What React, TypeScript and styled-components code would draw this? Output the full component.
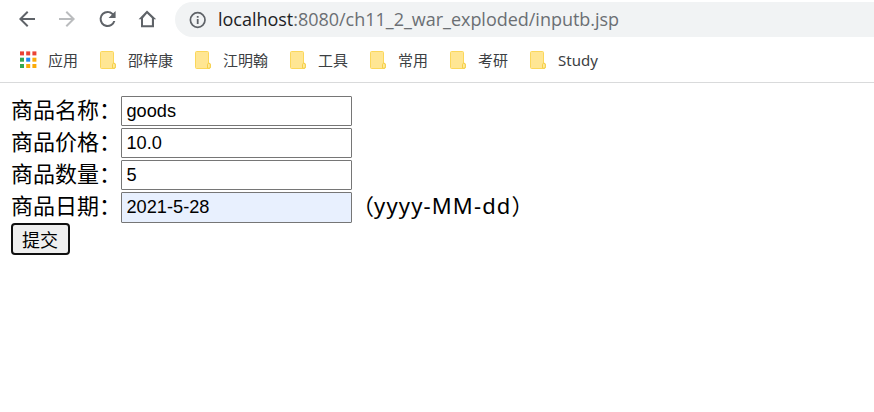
import React from 'react';
import styled, { createGlobalStyle } from 'styled-components';

const GlobalStyle = createGlobalStyle`
  * { box-sizing: border-box; }
  body { margin: 0; background: #fff; overflow: hidden; }
`;

const Window = styled.div`
  width: 874px;
  height: 412px;
  overflow: hidden;
  background: #fff;
  font-family: "Noto Sans", "Noto Sans CJK SC", sans-serif;
`;

const Toolbar = styled.header`
  display: flex;
  height: 39px;
  padding: 2px 0 2px 15px;
`;

const NavButtons = styled.nav`
  display: flex;
  gap: 16px;
  width: 160px;
  padding-top: 5px;
  flex: none;
`;

const NavIcon = styled.svg<{ $muted?: boolean }>`
  width: 24px;
  height: 24px;
  flex: none;
  fill: ${(p) => (p.$muted ? '#babcbe' : '#5f6368')};
`;

const AddressBar = styled.div`
  display: flex;
  align-items: center;
  flex: 1;
  height: 35px;
  padding-left: 13px;
  border-radius: 17.5px 0 0 17.5px;
  background: #f1f3f4;
`;

const InfoIcon = styled.svg`
  width: 20px;
  height: 20px;
  margin-right: 10px;
  flex: none;
`;

const Url = styled.span`
  color: #6b6f73;
  font-family: "Open Sans", sans-serif;
  font-size: 18px;
  line-height: 35px;
  letter-spacing: -0.02px;
  white-space: nowrap;
`;

const Host = styled.span`
  color: #202124;
`;

const Bookmarks = styled.div`
  display: flex;
  align-items: center;
  gap: 22px;
  height: 44px;
  padding: 0 0 2px 20px;
  border-bottom: 1px solid #d9dadb;
`;

const Bookmark = styled.div`
  display: flex;
  align-items: center;
  gap: 11px;
  font-size: 15px;
  line-height: 22px;
  color: #3c4043;
  white-space: nowrap;
`;

const BookmarkIcon = styled.svg`
  width: 17px;
  height: 18px;
  flex: none;
`;

const Form = styled.form`
  display: flex;
  flex-direction: column;
  align-items: flex-start;
  padding: 13px 0 0 11px;
`;

const Field = styled.label`
  display: flex;
  height: 32px;
  font-size: 22px;
  line-height: 26px;
  color: #000;
  white-space: nowrap;
`;

const FieldName = styled.span`
  width: 110px;
  flex: none;
`;

const Input = styled.input<{ $filled?: boolean }>`
  width: 231px;
  height: ${(p) => (p.$filled ? 31 : 30)}px;
  padding: 1px 4px 1px 4.5px;
  border: 1px solid #767676;
  border-radius: 1px;
  outline: none;
  background: ${(p) => (p.$filled ? '#e8f0fe' : '#fff')};
  color: #000;
  font: 18.2px "Liberation Sans", Arial, sans-serif;
`;

const Pattern = styled.span`
  letter-spacing: 1.15px;
`;

const Submit = styled.button`
  width: 59px;
  height: 32px;
  margin-top: -1px;
  padding: 0 1px 0 0;
  border: 2px solid #101010;
  border-radius: 4px;
  background: #efefef;
  color: #000;
  font: 18px/26px "Noto Sans CJK SC", sans-serif;
`;

const appDots = ['#ea4335', '#ea4335', '#ea4335', '#34a853', '#1e88f5', '#fbab09', '#34a853', '#fbab09', '#fbab09'];

const AppsIcon = () => (
  <BookmarkIcon viewBox="0 0 17 18">
    {appDots.map((color, i) => (
      <rect key={i} x={(i % 3) * 6.2} y={0.4 + Math.floor(i / 3) * 6.3} width="4" height="4" fill={color} />
    ))}
  </BookmarkIcon>
);

const FolderIcon = () => (
  <BookmarkIcon viewBox="0 0 17 18">
    <path d="M.5 1.5q0-1 1-1h11q1 0 1 1V12l1.5.5q.5.3.5 1.2v2.2q0 1.6-1.5 1.6H1.5q-1 0-1-1z" fill="#ffe693" stroke="#fbd75a" />
    <path d="M12.5 17v-3.2q0-1.5 1.2-1.5 1.6 0 1.6 1.5v2q0 1.5-1.3 1.5z" fill="#ffe99d" stroke="#f5cf48" />
  </BookmarkIcon>
);

const folders = ['邵梓康', '江明翰', '工具', '常用', '考研', 'Study'];
const fields = [
  { name: '商品名称：', value: 'goods' },
  { name: '商品价格：', value: '10.0' },
  { name: '商品数量：', value: '5' },
  { name: '商品日期：', value: '2021-5-28', pattern: 'yyyy-MM-dd' },
];

export default function App() {
  return (
    <Window lang="zh-CN">
      <GlobalStyle />
      <Toolbar>
        <NavButtons>
          <NavIcon viewBox="0 0 24 24"><path d="M20 11H7.83l5.59-5.59L12 4l-8 8 8 8 1.41-1.41L7.83 13H20z" /></NavIcon>
          <NavIcon $muted viewBox="0 0 24 24"><path d="M4 11h12.17l-5.59-5.59L12 4l8 8-8 8-1.41-1.41L16.17 13H4z" /></NavIcon>
          <NavIcon viewBox="0 0 24 24"><path transform="translate(.6)" d="M17.65 6.35A7.96 7.96 0 0 0 12 4a8 8 0 1 0 7.73 10h-2.08A6 6 0 1 1 12 6c1.66 0 3.14.69 4.22 1.78L13 11h7V4z" /></NavIcon>
          <NavIcon viewBox="0 0 24 24"><path d="M12 3.6 3.6 12.2H6V20.2H19V12.2H21.2zM12 6.5l4.9 4.8V18.2H8v-6.9z" /></NavIcon>
        </NavButtons>
        <AddressBar>
          <InfoIcon viewBox="0 0 20 20">
            <circle cx="9.7" cy="10" r="7.3" fill="none" stroke="#5f6368" strokeWidth="1.7" />
            <path d="M8.8 6h1.8v1.8H8.8zM8.8 9.1h1.8v5H8.8z" fill="#5f6368" />
          </InfoIcon>
          <Url><Host>localhost</Host>:8080/ch11_2_war_exploded/inputb.jsp</Url>
        </AddressBar>
      </Toolbar>
      <Bookmarks>
        <Bookmark><AppsIcon />应用</Bookmark>
        {folders.map((name) => (
          <Bookmark key={name}><FolderIcon />{name}</Bookmark>
        ))}
      </Bookmarks>
      <Form onSubmit={(e) => e.preventDefault()}>
        {fields.map((f) => (
          <Field key={f.name}>
            <FieldName>{f.name}</FieldName>
            <Input defaultValue={f.value} $filled={!!f.pattern} />
            {f.pattern && <span>（<Pattern>{f.pattern}</Pattern>）</span>}
          </Field>
        ))}
        <Submit>提交</Submit>
      </Form>
    </Window>
  );
}
